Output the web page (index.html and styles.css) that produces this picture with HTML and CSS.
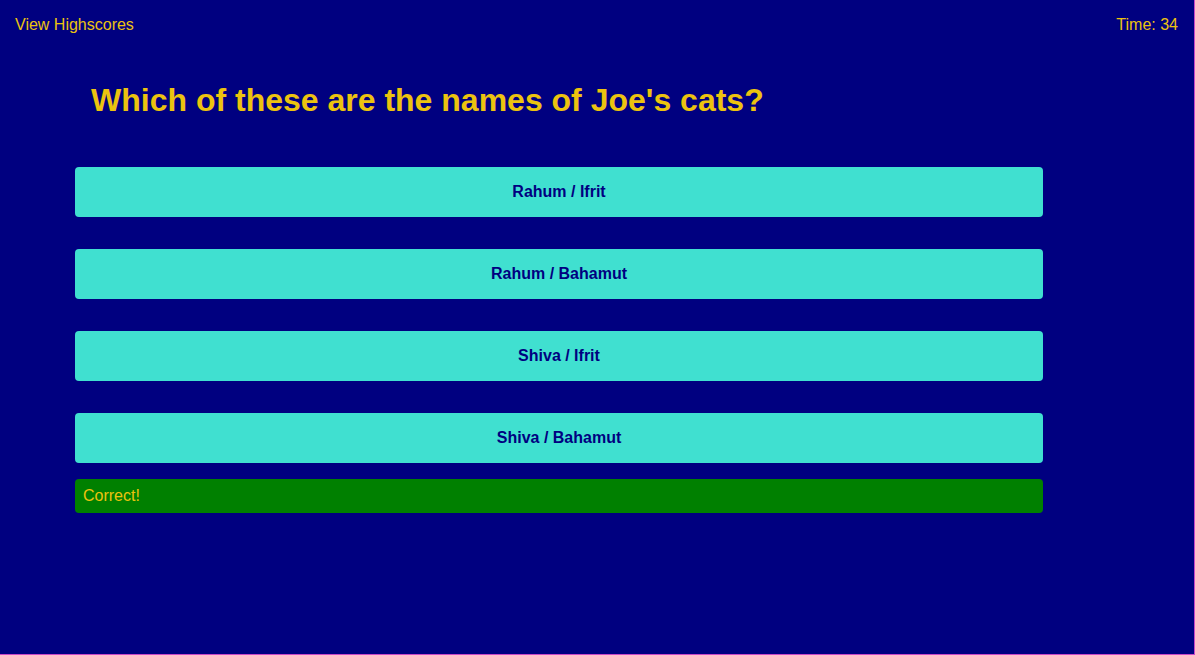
FILE: index.html
```html
<!DOCTYPE html>
<html lang="en">
<head>
<meta charset="utf-8">
<title>Quiz</title>
<link rel="stylesheet" href="styles.css">
</head>
<body>
<div class="page">
  <header class="top-bar">
    <a class="highscores-link" href="#">View Highscores</a>
    <span class="timer">Time: 34</span>
  </header>
  <main class="quiz">
    <h1 class="question">Which of these are the names of Joe's cats?</h1>
    <div class="choices">
      <button class="choice">Rahum / Ifrit</button>
      <button class="choice">Rahum / Bahamut</button>
      <button class="choice">Shiva / Ifrit</button>
      <button class="choice">Shiva / Bahamut</button>
    </div>
    <div class="feedback">Correct!</div>
  </main>
</div>
</body>
</html>
```
FILE: styles.css
```css
* { box-sizing: border-box; }
html, body {
  margin: 0;
  padding: 0;
  background: #000080;
}
body {
  font-family: "Liberation Sans", Arial, sans-serif;
  color: #ecc30f;
}
.page {
  width: 1195px;
  height: 655px;
  border-right: 1px solid #c848c8;
  border-bottom: 1px solid #c848c8;
  background: #000080;
}
.top-bar {
  display: flex;
  justify-content: space-between;
  padding: 16px 16px 0 15px;
  font-size: 16px;
  line-height: 18px;
}
.highscores-link {
  color: #ecc30f;
  text-decoration: none;
}
.quiz {
  width: 968px;
  margin-left: 75px;
}
.question {
  margin: 48px 0 0 16px;
  font-size: 32px;
  line-height: 37px;
  font-weight: bold;
}
.choices {
  display: flex;
  flex-direction: column;
  gap: 32px;
  margin-top: 48px;
}
.choice {
  height: 50px;
  width: 100%;
  border: 0;
  border-radius: 4px;
  background: #40e0d0;
  color: #000080;
  font-family: "Liberation Sans", Arial, sans-serif;
  font-size: 16px;
  font-weight: bold;
  cursor: pointer;
}
.feedback {
  margin-top: 16px;
  height: 34px;
  padding: 0 8px;
  border-radius: 4px;
  background: #008000;
  font-size: 16px;
  line-height: 34px;
}
```
